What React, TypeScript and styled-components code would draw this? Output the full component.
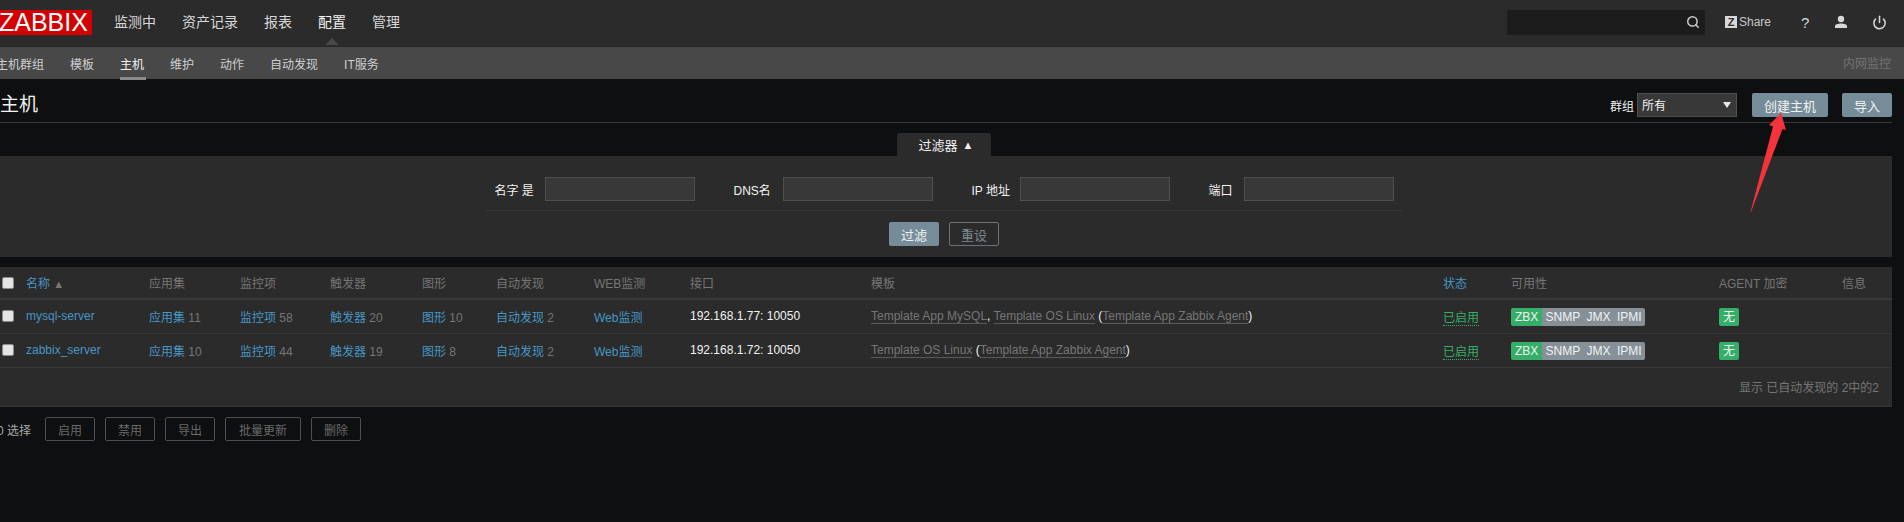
import React from 'react';
import styled, { createGlobalStyle } from 'styled-components';
import { Search, Power } from 'lucide-react';

const mainMenu = ['监测中', '资产记录', '报表', '配置', '管理'];
const subMenu = ['主机群组', '模板', '主机', '维护', '动作', '自动发现', 'IT服务'];
const columns = [36, 123, 91, 90, 92, 74, 98, 96, 181, 572, 68, 208, 123, 50];
const heads = ['应用集', '监控项', '触发器', '图形', '自动发现', 'WEB监测', '接口', '模板'];
const filterFields = [
  { label: '名字 是', width: 40 },
  { label: 'DNS名', width: 39 },
  { label: 'IP 地址', width: 38 },
  { label: '端口', width: 25 },
];

const hosts = [
  {
    name: 'mysql-server',
    apps: 11,
    items: 58,
    triggers: 20,
    graphs: 10,
    discovery: 2,
    ip: '192.168.1.77: 10050',
    templates: ['Template App MySQL', 'Template OS Linux'],
  },
  {
    name: 'zabbix_server',
    apps: 10,
    items: 44,
    triggers: 19,
    graphs: 8,
    discovery: 2,
    ip: '192.168.1.72: 10050',
    templates: ['Template OS Linux'],
  },
];

export default function App() {
  return (
    <Page>
      <GlobalStyle />
      <TopBar>
        <Logo>ZABBIX</Logo>
        <MainNav>
          {mainMenu.map(m => (
            <MainItem key={m} $active={m === '配置'}>{m}</MainItem>
          ))}
        </MainNav>
        <TopTools>
          <SearchBox>
            <Search size={14} strokeWidth={2.6} color="#c8c8c8" />
          </SearchBox>
          <ShareLink>
            <ShareMark>Z</ShareMark>
            Share
          </ShareLink>
          <HelpLink>?</HelpLink>
          <UserIcon viewBox="0 0 14 14">
            <circle cx="7" cy="4" r="3.2" fill="#d8d8d8" />
            <path d="M1 13v-2c0-1.4 3-2.4 6-2.4s6 1 6 2.4v2z" fill="#d8d8d8" />
          </UserIcon>
          <Power size={15} strokeWidth={2.4} color="#d8d8d8" />
        </TopTools>
      </TopBar>

      <SubBar>
        <SubNav>
          {subMenu.map(m => (
            <SubItem key={m} $active={m === '主机'}>{m}</SubItem>
          ))}
        </SubNav>
        <ServerName>内网监控</ServerName>
      </SubBar>

      <Content>
        <TitleRow>
          <Title>主机</Title>
          <TitleControls>
            <GroupLabel>群组</GroupLabel>
            <GroupSelect>
              所有
              <Caret />
            </GroupSelect>
            <MainButton $width={76}>创建主机</MainButton>
            <MainButton $width={50}>导入</MainButton>
          </TitleControls>
        </TitleRow>

        <FilterTabRow>
          <FilterTab>过滤器<FilterMark>▲</FilterMark></FilterTab>
        </FilterTabRow>
        <FilterPanel>
          <FilterFields>
            {filterFields.map(f => (
              <Field key={f.label}>
                <FieldLabel $width={f.width}>{f.label}</FieldLabel>
                <TextInput />
              </Field>
            ))}
          </FilterFields>
          <FilterRule />
          <FilterButtons>
            <MainButton $width={50}>过滤</MainButton>
            <GhostButton $width={50} $bright>重设</GhostButton>
          </FilterButtons>
        </FilterPanel>

        <TablePanel>
          <HostTable>
            <colgroup>
              {columns.map((w, i) => <col key={i} style={{ width: w }} />)}
            </colgroup>
            <thead>
              <tr>
                <HeadCheckCell><Check type="checkbox" /></HeadCheckCell>
                <th><HeadLink>名称</HeadLink> <SortMark>▲</SortMark></th>
                {heads.map(h => <th key={h}>{h}</th>)}
                <th><HeadLink>状态</HeadLink></th>
                <th>可用性</th>
                <th>AGENT 加密</th>
                <th>信息</th>
              </tr>
            </thead>
            <tbody>
              {hosts.map(h => (
                <tr key={h.name}>
                  <CheckCell><Check type="checkbox" /></CheckCell>
                  <td><Link>{h.name}</Link></td>
                  <td><Link>应用集</Link> <Count>{h.apps}</Count></td>
                  <td><Link>监控项</Link> <Count>{h.items}</Count></td>
                  <td><Link>触发器</Link> <Count>{h.triggers}</Count></td>
                  <td><Link>图形</Link> <Count>{h.graphs}</Count></td>
                  <td><Link>自动发现</Link> <Count>{h.discovery}</Count></td>
                  <td><Link>Web监测</Link></td>
                  <td>{h.ip}</td>
                  <td>
                    {h.templates.map((t, i) => (
                      <React.Fragment key={t}>
                        {i > 0 && ', '}
                        <TemplateLink>{t}</TemplateLink>
                      </React.Fragment>
                    ))}
                    {' ('}
                    <TemplateLink>Template App Zabbix Agent</TemplateLink>
                    )
                  </td>
                  <td><Status>已启用</Status></td>
                  <td>
                    <Badges>
                      <Badge $on>ZBX</Badge>
                      <Badge>SNMP</Badge>
                      <Badge>JMX</Badge>
                      <Badge>IPMI</Badge>
                    </Badges>
                  </td>
                  <td><Badges><Badge $on>无</Badge></Badges></td>
                  <td />
                </tr>
              ))}
            </tbody>
          </HostTable>
          <TableFooter>显示 已自动发现的 2中的2</TableFooter>
        </TablePanel>

        <ActionBar>
          <Selected>0 选择</Selected>
          <GhostButton $width={50}>启用</GhostButton>
          <GhostButton $width={50}>禁用</GhostButton>
          <GhostButton $width={50}>导出</GhostButton>
          <GhostButton $width={76}>批量更新</GhostButton>
          <GhostButton $width={50}>删除</GhostButton>
        </ActionBar>
      </Content>

      <Annotation viewBox="0 0 60 110">
        <path d="M32 3 L37 20 L33.500 19 L2 102 L1.500 102 L24 16.500 L20 15 Z" fill="#f4333c" />
      </Annotation>
    </Page>
  );
}

const GlobalStyle = createGlobalStyle`
  html, body {
    margin: 0;
    height: 100%;
    background: #0e0f10;
    overflow: hidden;
  }
  * {
    box-sizing: border-box;
  }
`;

const Page = styled.div`
  position: relative;
  width: 1914px;
  margin-left: -10px;
  min-height: 522px;
  background: #0e0f10;
  color: #f2f2f2;
  font-family: "Liberation Sans", "Noto Sans CJK SC", sans-serif;
  font-size: 12px;
`;

const TopBar = styled.div`
  display: flex;
  align-items: center;
  height: 47px;
  background: #2b2b2b;
  border-bottom: 1px solid #262626;
`;

const Logo = styled.div`
  width: 102px;
  height: 25px;
  margin-top: -2px;
  padding-left: 9px;
  background: #d40000;
  color: #fff;
  font-size: 25px;
  line-height: 25px;
  white-space: nowrap;
`;

const MainNav = styled.div`
  display: flex;
  gap: 26px;
  margin-left: 22px;
  margin-top: -2px;
`;

const MainItem = styled.div<{ $active?: boolean }>`
  position: relative;
  font-size: 14px;
  line-height: 20px;
  color: ${({ $active }) => ($active ? '#f2f2f2' : '#d8d8d8')};

  ${({ $active }) => $active && `
    &::after {
      content: '';
      position: absolute;
      left: 50%;
      bottom: -13px;
      margin-left: -7px;
      border: 7px solid transparent;
      border-top: 0;
      border-bottom-color: #484848;
    }
  `}
`;

const TopTools = styled.div`
  display: flex;
  align-items: center;
  margin-left: auto;
  margin-top: -2px;
  padding-right: 17px;
`;

const SearchBox = styled.div`
  display: flex;
  align-items: center;
  justify-content: flex-end;
  width: 198px;
  height: 25px;
  margin-right: 20px;
  padding-right: 5px;
  background: #1c1c1c;
`;

const ShareLink = styled.div`
  display: flex;
  align-items: center;
  width: 64px;
  color: #c8c8c8;
`;

const ShareMark = styled.span`
  width: 12px;
  height: 12px;
  margin-right: 2px;
  background: #d8d8d8;
  color: #2b2b2b;
  font-size: 11px;
  font-weight: 700;
  line-height: 12px;
  text-align: center;
`;

const HelpLink = styled.div`
  width: 28px;
  margin-left: 12px;
  color: #d8d8d8;
  font-size: 15px;
`;

const UserIcon = styled.svg`
  width: 14px;
  height: 14px;
  margin: 0 24px 0 5px;
`;

const SubBar = styled.div`
  display: flex;
  align-items: center;
  height: 32px;
  padding: 0 13px 0 6px;
  background: #484848;
`;

const SubNav = styled.div`
  display: flex;
  gap: 26px;
`;

const SubItem = styled.div<{ $active?: boolean }>`
  position: relative;
  color: ${({ $active }) => ($active ? '#f2f2f2' : '#cfcfcf')};

  ${({ $active }) => $active && `
    &::after {
      content: '';
      position: absolute;
      left: 0;
      right: -2px;
      bottom: -8px;
      height: 3px;
      background: #8a8a8a;
    }
  `}
`;

const ServerName = styled.div`
  margin-left: auto;
  margin-top: -2px;
  color: #737373;
`;

const Content = styled.div`
  padding: 0 12px 0 0;
`;

const TitleRow = styled.div`
  display: flex;
  align-items: flex-start;
  justify-content: space-between;
  height: 44px;
  padding-left: 10px;
  padding-top: 14px;
  border-bottom: 1px solid #383838;
`;

const Title = styled.h1`
  margin: 0;
  font-size: 19px;
  font-weight: 400;
  line-height: 24px;
  color: #f2f2f2;
`;

const TitleControls = styled.div`
  display: flex;
  align-items: center;
`;

const GroupLabel = styled.span`
  margin-right: 3px;
`;

const GroupSelect = styled.div`
  position: relative;
  width: 100px;
  height: 24px;
  margin-right: 15px;
  padding-left: 4px;
  background: #383838;
  border: 1px solid #4f4f4f;
  line-height: 24px;
`;

const Caret = styled.span`
  position: absolute;
  right: 5px;
  top: 8px;
  border: 4px solid transparent;
  border-bottom: 0;
  border-top: 6px solid #e8e8e8;
`;

const MainButton = styled.button<{ $width: number }>`
  width: ${({ $width }) => $width}px;
  height: 24px;
  padding: 0;
  background: #768d99;
  border: 0;
  border-radius: 2px;
  color: #f2f2f2;
  font-family: inherit;
  font-size: 13px;

  & + & {
    margin-left: 14px;
  }
`;

const FilterTabRow = styled.div`
  display: flex;
  justify-content: center;
  margin-top: 10px;
  padding-left: 6px;
`;

const FilterTab = styled.div`
  display: flex;
  align-items: center;
  justify-content: center;
  width: 94px;
  height: 23px;
  padding-left: 4px;
  background: #2b2b2b;
  border-radius: 2px 2px 0 0;
  font-size: 13px;
`;

const FilterMark = styled.span`
  margin-left: 5px;
  font-size: 11px;
`;

const FilterPanel = styled.div`
  height: 101px;
  padding: 21px 0 0 6px;
  background: #2b2b2b;
`;

const FilterFields = styled.div`
  display: flex;
  justify-content: center;
  gap: 39px;
`;

const Field = styled.label`
  display: flex;
  align-items: center;
  gap: 10px;
`;

const FieldLabel = styled.span<{ $width: number }>`
  width: ${({ $width }) => $width}px;
  white-space: nowrap;
`;

const TextInput = styled.input`
  width: 150px;
  height: 24px;
  background: #383838;
  border: 1px solid #4f4f4f;
  outline: 0;
`;

const FilterRule = styled.div`
  width: 916px;
  height: 1px;
  margin: 9px auto 11px;
  background: #383838;
`;

const FilterButtons = styled.div`
  display: flex;
  justify-content: center;
  gap: 10px;
`;

const GhostButton = styled.button<{ $width: number; $bright?: boolean }>`
  width: ${({ $width }) => $width}px;
  height: 24px;
  padding: 0;
  background: transparent;
  border: 1px solid ${({ $bright }) => ($bright ? '#6d7478' : '#4f4f4f')};
  border-radius: 2px;
  color: ${({ $bright }) => ($bright ? '#7c8a90' : '#6a6a6a')};
  font-family: inherit;
  font-size: ${({ $bright }) => ($bright ? '13px' : '12px')};
`;

const TablePanel = styled.div`
  margin-top: 10px;
  height: 140px;
  background: #2b2b2b;
  border-bottom: 1px solid #383838;
`;

const HostTable = styled.table`
  width: 100%;
  border-collapse: collapse;
  table-layout: fixed;

  th, td {
    padding: 0;
    text-align: left;
    font-weight: 400;
    white-space: nowrap;
  }

  th {
    height: 32px;
    color: #767676;
    border-bottom: 2px solid #383838;
  }

  td {
    height: 34px;
    border-bottom: 1px solid #383838;
  }
`;

const CheckCell = styled.td`
  padding-left: 12px !important;
`;

const HeadCheckCell = styled.th`
  padding-left: 12px !important;
`;

const Check = styled.input`
  display: block;
  width: 12px;
  height: 12px;
  margin: 0;
  appearance: none;
  background: #e4e4e4;
  border: 1px solid #8a8a8a;
  border-radius: 2px;
`;

const HeadLink = styled.span`
  color: #4796c4;
`;

const SortMark = styled.span`
  color: #767676;
  font-size: 11px;
`;

const Link = styled.span`
  color: #4796c4;
`;

const Count = styled.span`
  color: #767676;
`;

const TemplateLink = styled.span`
  color: #767676;
  border-bottom: 1px solid #5a5a5a;
`;

const Status = styled.span`
  color: #34af67;
  border-bottom: 1px dotted #34af67;
`;

const Badges = styled.div`
  display: inline-flex;
  height: 18px;
  margin-top: 1px;
  border-radius: 2px;
  overflow: hidden;
`;

const Badge = styled.span<{ $on?: boolean }>`
  padding: 0 ${({ $on }) => ($on ? '4px' : '3.2px')};
  background: ${({ $on }) => ($on ? '#34af67' : '#859099')};
  color: #f2f2f2;
  line-height: 18px;
`;

const TableFooter = styled.div`
  padding: 10px 13px 0 0;
  color: #767676;
  text-align: right;
`;

const ActionBar = styled.div`
  display: flex;
  align-items: center;
  gap: 10px;
  margin-top: 10px;
  padding-left: 7px;
`;

const Selected = styled.span`
  width: 38px;
  color: #a8a8a8;
  white-space: nowrap;
`;

const Annotation = styled.svg`
  position: absolute;
  left: 1759px;
  top: 110px;
  width: 60px;
  height: 110px;
`;
